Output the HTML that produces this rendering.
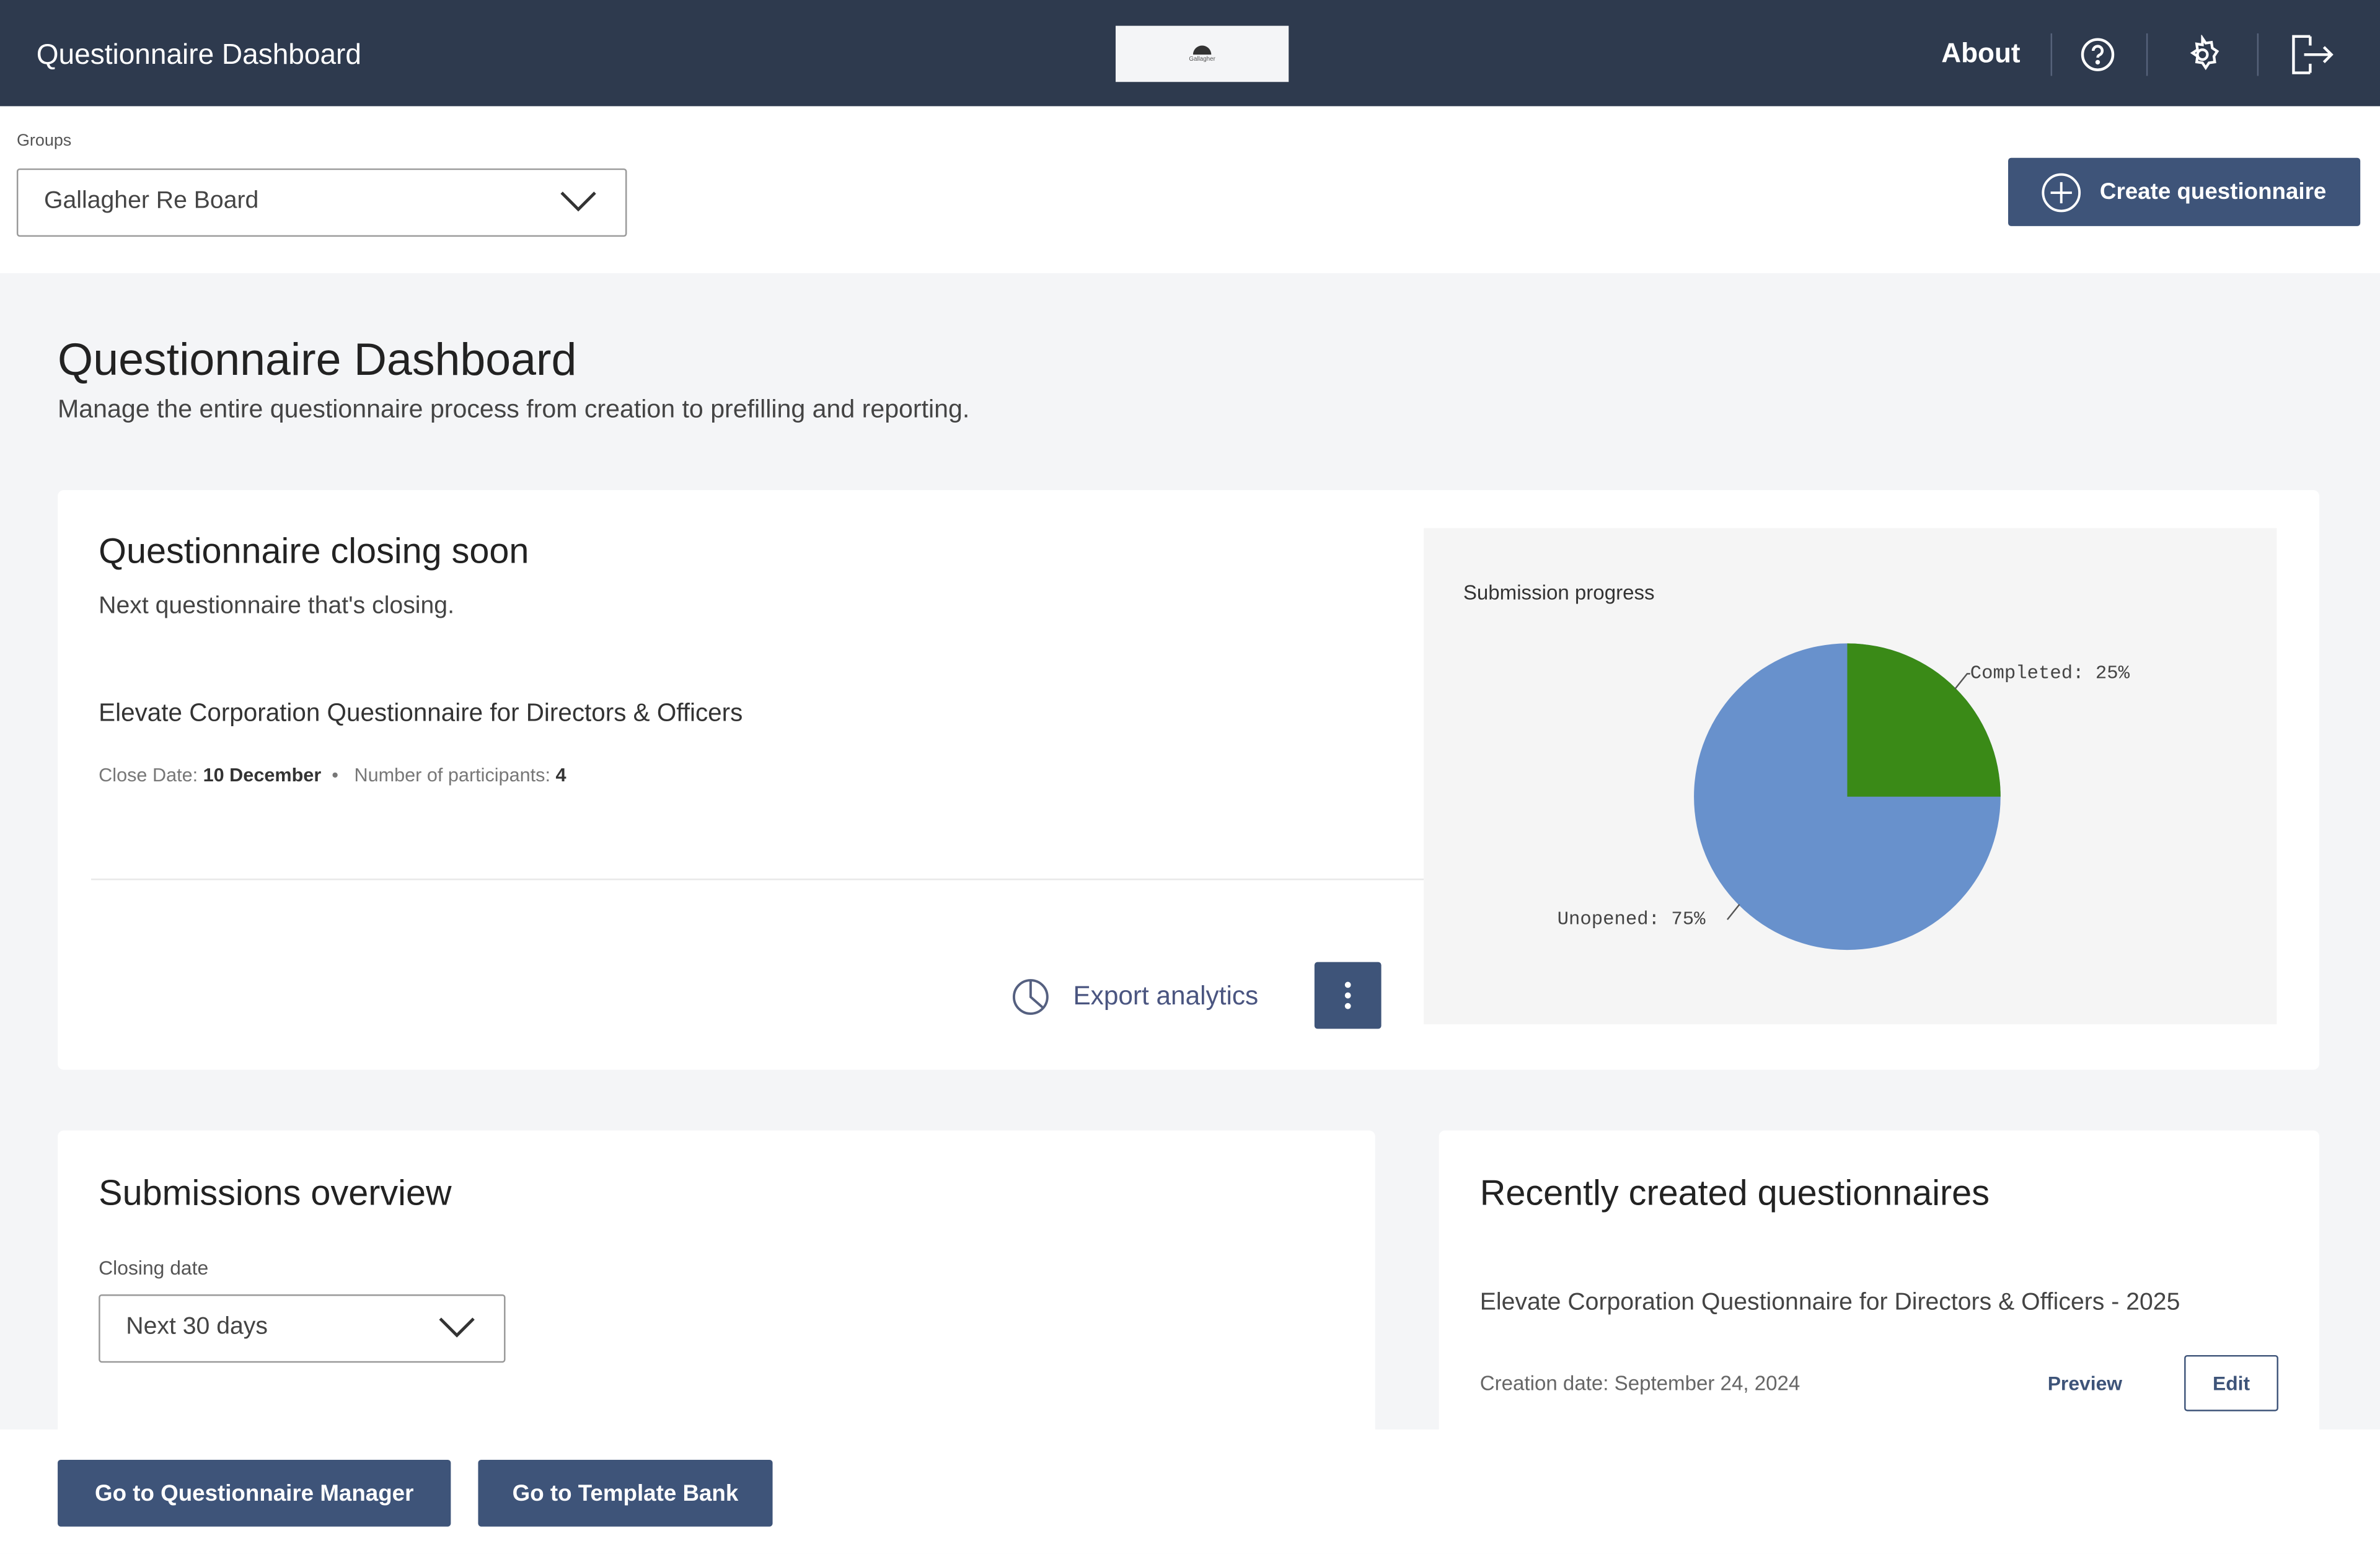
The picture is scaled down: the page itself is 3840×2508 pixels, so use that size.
<!DOCTYPE html>
<html><head><meta charset="utf-8"><style>
*{box-sizing:border-box;margin:0;padding:0}
html,body{width:3840px;height:2508px;overflow:hidden;background:#fff}
#s{width:1568px;height:1024px;transform:scale(2.449);transform-origin:0 0;position:relative;font-family:"Liberation Sans",sans-serif;color:#222;background:#f4f5f7}
.a{position:absolute}
.btn{background:#3e5479;color:#fff;font-weight:bold;font-size:15px;display:flex;align-items:center;justify-content:center;border-radius:2px}
.card{background:#fff;border-radius:4px}
</style></head><body><div id="s">
<div class="a" style="left:0;top:0;width:1568px;height:70px;background:#2e3a4e;box-shadow:0 2px 4px rgba(0,0,0,.25)"></div>
<div class="a" style="left:24px;top:25px;color:#fff;font-size:18.8px">Questionnaire Dashboard</div>
<div class="a" style="left:735px;top:17px;width:114px;height:37px;background:#f4f5f7;display:flex;flex-direction:column;align-items:center;justify-content:center"><div style="width:12px;height:6px;background:#333;border-radius:6px 6px 0 0"></div><div style="font-size:4px;color:#555">Gallagher</div></div>
<div class="a" style="left:1279px;top:25px;color:#fff;font-size:18px;font-weight:bold">About</div>
<div class="a" style="left:1351px;top:22px;width:1px;height:28px;background:#56627a"></div>
<div class="a" style="left:1414px;top:22px;width:1px;height:28px;background:#56627a"></div>
<div class="a" style="left:1487px;top:22px;width:1px;height:28px;background:#56627a"></div>
<svg class="a" style="left:1370px;top:24px" width="24" height="24" viewBox="0 0 24 24" fill="none" stroke="#fff" stroke-width="1.8"><circle cx="12" cy="12" r="10"/><path d="M9 9.5a3 3 0 1 1 4 2.8c-.7.4-1 .9-1 1.7"/><circle cx="12" cy="17" r=".6" fill="#fff"/></svg>
<svg class="a" style="left:1438px;top:23px" width="26" height="26" viewBox="0 0 24 24" fill="none" stroke="#fff" stroke-width="1.6"><path d="M12 2l2 3 3.5-.5.5 3.5 3 2-2 3 .5 3.5-3.5.5-2 3-2-3-3.5-.5.5-3.5-3-2 3-2-.5-3.5 3.5.5z"/><circle cx="12" cy="12" r="3"/></svg>
<svg class="a" style="left:1508px;top:22px" width="30" height="28" viewBox="0 0 30 28" fill="none" stroke="#fff" stroke-width="1.8"><path d="M14 2H3v24h11M14 2v6M14 20v6M10 14h18M23 9l5 5-5 5"/></svg>
<div class="a" style="left:0;top:70px;width:1568px;height:110px;background:#fff"></div>
<div class="a" style="left:11px;top:87px;font-size:11px;color:#555">Groups</div>
<div class="a" style="left:11px;top:111px;width:402px;height:45px;border:1px solid #999;border-radius:2px;background:#fff"></div>
<div class="a" style="left:29px;top:124px;font-size:16px;color:#444">Gallagher Re Board</div>
<svg class="a" style="left:369px;top:126px" width="24" height="14" viewBox="0 0 24 14" fill="none" stroke="#333" stroke-width="2"><path d="M1 1l11 11L23 1"/></svg>
<div class="a btn" style="left:1323px;top:104px;width:232px;height:45px"><svg width="26" height="26" viewBox="0 0 26 26" fill="none" stroke="#fff" stroke-width="1.6" style="margin-right:12px"><circle cx="13" cy="13" r="12"/><path d="M13 6v14M6 13h14"/></svg>Create questionnaire</div>
<div class="a" style="left:38px;top:221px;font-size:30px;color:#222">Questionnaire Dashboard</div>
<div class="a" style="left:38px;top:260px;font-size:16.8px;color:#444">Manage the entire questionnaire process from creation to prefilling and reporting.</div>
<div class="a card" style="left:38px;top:323px;width:1490px;height:382px"></div>
<div class="a" style="left:65px;top:350px;font-size:23.5px;color:#222">Questionnaire closing soon</div>
<div class="a" style="left:65px;top:391px;font-size:16px;color:#444">Next questionnaire that's closing.</div>
<div class="a" style="left:65px;top:461px;font-size:16.5px;color:#333">Elevate Corporation Questionnaire for Directors &amp; Officers</div>
<div class="a" style="left:65px;top:504px;font-size:12.5px;color:#777">Close Date: <b style="color:#333">10 December</b> &nbsp;•&nbsp;&nbsp; Number of participants: <b style="color:#333">4</b></div>
<div class="a" style="left:60px;top:579px;width:878px;height:1px;background:#e8e8e8"></div>
<svg class="a" style="left:666px;top:644px" width="26" height="26" viewBox="0 0 26 26" fill="none" stroke="#556080" stroke-width="1.6"><circle cx="13" cy="13" r="11"/><path d="M13 2v11l8 7"/></svg>
<div class="a" style="left:707px;top:646px;font-size:17.3px;color:#4a5580">Export analytics</div>
<div class="a btn" style="left:866px;top:634px;width:44px;height:44px;flex-direction:column;gap:3px"><i style="width:4px;height:4px;background:#fff;border-radius:2px"></i><i style="width:4px;height:4px;background:#fff;border-radius:2px"></i><i style="width:4px;height:4px;background:#fff;border-radius:2px"></i></div>
<div class="a" style="left:938px;top:348px;width:562px;height:327px;background:#f5f5f5"></div>
<div class="a" style="left:964px;top:383px;font-size:13.5px;color:#333">Submission progress</div>
<svg class="a" style="left:938px;top:348px" width="562" height="327">
<circle cx="279" cy="177" r="101" fill="#6891cc"/>
<path d="M279 177V76A101 101 0 0 1 380 177Z" fill="#3a8a17"/>
<path d="M350 106l8-10h2M208 248l-8 10" stroke="#555" fill="none"/>
<text x="360" y="99" font-size="12.5" fill="#444" font-family="Liberation Mono,monospace">Completed: 25%</text>
<text x="88" y="261" font-size="12.5" fill="#444" font-family="Liberation Mono,monospace">Unopened: 75%</text>
</svg>
<div class="a card" style="left:38px;top:745px;width:868px;height:220px"></div>
<div class="a card" style="left:948px;top:745px;width:580px;height:220px"></div>
<div class="a" style="left:65px;top:773px;font-size:23.5px;color:#222">Submissions overview</div>
<div class="a" style="left:65px;top:828px;font-size:13px;color:#555">Closing date</div>
<div class="a" style="left:65px;top:853px;width:268px;height:45px;border:1px solid #999;border-radius:2px"></div>
<div class="a" style="left:83px;top:866px;font-size:16px;color:#444">Next 30 days</div>
<svg class="a" style="left:289px;top:868px" width="24" height="14" viewBox="0 0 24 14" fill="none" stroke="#333" stroke-width="2"><path d="M1 1l11 11L23 1"/></svg>
<div class="a" style="left:975px;top:773px;font-size:23.5px;color:#222">Recently created questionnaires</div>
<div class="a" style="left:975px;top:850px;font-size:16px;color:#444">Elevate Corporation Questionnaire for Directors &amp; Officers - 2025</div>
<div class="a" style="left:975px;top:904px;font-size:13.5px;color:#666">Creation date: September 24, 2024</div>
<div class="a" style="left:1349px;top:904px;font-size:13px;color:#3e5479;font-weight:bold">Preview</div>
<div class="a" style="left:1439px;top:893px;width:62px;height:37px;border:1px solid #3e5479;border-radius:2px;font-size:13px;color:#3e5479;font-weight:bold;display:flex;align-items:center;justify-content:center">Edit</div>
<div class="a" style="left:0;top:942px;width:1568px;height:82px;background:#fff"></div>
<div class="a btn" style="left:38px;top:962px;width:259px;height:44px">Go to Questionnaire Manager</div>
<div class="a btn" style="left:315px;top:962px;width:194px;height:44px">Go to Template Bank</div>
</div></body></html>
